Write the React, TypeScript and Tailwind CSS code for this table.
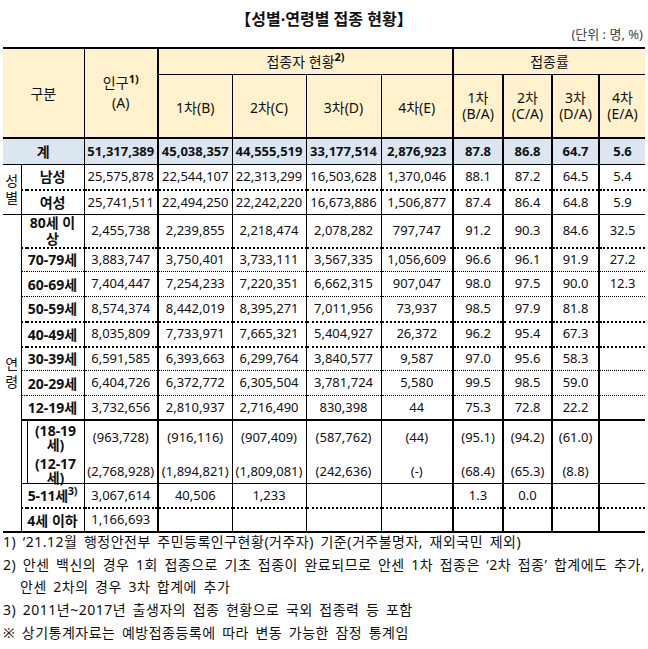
import type { ReactNode } from "react";
import clsx from "clsx";

const colBorder = [
  "border-r-2",
  "border-r",
  "border-r",
  "border-r",
  "border-r-2",
  "border-r-2",
  "border-r-2",
  "border-r-2",
  "",
];

const solid1 = "border-b border-b-black";
const solid2 = "border-b-2 border-b-black";
const dotThin = "border-b border-b-black [border-bottom-style:dotted]";
const dotThick = "border-b-2 border-b-black [border-bottom-style:dotted]";

const cell = "p-0 text-center align-middle whitespace-nowrap border-black";

type AgeRow = {
  label: ReactNode;
  vals: string[];
  bottom: string;
  h: string;
};

const ageRows: AgeRow[] = [
  {
    label: (
      <div className="h-[32px] leading-[16px] whitespace-normal">
        80세 이<br />상
      </div>
    ),
    vals: ["2,455,738", "2,239,855", "2,218,474", "2,078,282", "797,747", "91.2", "90.3", "84.6", "32.5"],
    bottom: dotThick,
    h: "h-[32px]",
  },
  {
    label: "70-79세",
    vals: ["3,883,747", "3,750,401", "3,733,111", "3,567,335", "1,056,609", "96.6", "96.1", "91.9", "27.2"],
    bottom: dotThin,
    h: "h-[24px]",
  },
  {
    label: "60-69세",
    vals: ["7,404,447", "7,254,233", "7,220,351", "6,662,315", "907,047", "98.0", "97.5", "90.0", "12.3"],
    bottom: dotThin,
    h: "h-[25px]",
  },
  {
    label: "50-59세",
    vals: ["8,574,374", "8,442,019", "8,395,271", "7,011,956", "73,937", "98.5", "97.9", "81.8", ""],
    bottom: dotThick,
    h: "h-[25px]",
  },
  {
    label: "40-49세",
    vals: ["8,035,809", "7,733,971", "7,665,321", "5,404,927", "26,372", "96.2", "95.4", "67.3", ""],
    bottom: dotThick,
    h: "h-[25px]",
  },
  {
    label: "30-39세",
    vals: ["6,591,585", "6,393,663", "6,299,764", "3,840,577", "9,587", "97.0", "95.6", "58.3", ""],
    bottom: dotThin,
    h: "h-[24px]",
  },
  {
    label: "20-29세",
    vals: ["6,404,726", "6,372,772", "6,305,504", "3,781,724", "5,580", "99.5", "98.5", "59.0", ""],
    bottom: dotThin,
    h: "h-[25px]",
  },
  {
    label: "12-19세",
    vals: ["3,732,656", "2,810,937", "2,716,490", "830,398", "44", "75.3", "72.8", "22.2", ""],
    bottom: solid2,
    h: "h-[24px]",
  },
];

const subVals: [string, string][] = [
  ["(963,728)", "(2,768,928)"],
  ["(916,116)", "(1,894,821)"],
  ["(907,409)", "(1,809,081)"],
  ["(587,762)", "(242,636)"],
  ["(44)", "(-)"],
  ["(95.1)", "(68.4)"],
  ["(94.2)", "(65.3)"],
  ["(61.0)", "(8.8)"],
  ["", ""],
];

function Vals({ vals, bottom, bold }: { vals: string[]; bottom: string; bold?: boolean }) {
  return (
    <>
      {vals.map((v, i) => (
        <td key={i} className={clsx(cell, colBorder[i], bottom, bold && "font-bold")}>
          {v}
        </td>
      ))}
    </>
  );
}

function Vertical({ chars, gap }: { chars: string[]; gap: string }) {
  return (
    <div className={clsx("flex flex-col items-center text-[14px]", gap)}>
      {chars.map((c) => (
        <span key={c} className="leading-[17px]">
          {c}
        </span>
      ))}
    </div>
  );
}

export default function App() {
  return (
    <div className="w-[648px] h-[649px] bg-white text-[#111] font-['Noto_Sans','Noto_Sans_CJK_KR',sans-serif]">
      <div className="pt-[8px] text-center text-[16px] font-bold leading-[22px]">
        【성별·연령별 접종 현황】
      </div>
      <div className="mt-[-3px] pr-[5px] text-right text-[13px] leading-[14px] text-[#444]">
        (단위 : 명, %)
      </div>

      <div className="mt-[6px] px-[3px]">
        <table className="w-[642px] table-fixed border-collapse text-[13px]">
          <colgroup>
            <col className="w-[18px]" />
            <col className="w-[6px]" />
            <col className="w-[57px]" />
            <col className="w-[74px]" />
            <col className="w-[74px]" />
            <col className="w-[74px]" />
            <col className="w-[75px]" />
            <col className="w-[72px]" />
            <col className="w-[50px]" />
            <col className="w-[49px]" />
            <col className="w-[47px]" />
            <col className="w-[46px]" />
          </colgroup>
          <thead className="bg-[#fff2cc] text-[14px]">
            <tr className="h-[26px]">
              <th
                rowSpan={2}
                colSpan={3}
                className={clsx(cell, "font-normal border-t-2 border-r", solid2)}
              >
                구분
              </th>
              <th rowSpan={2} className={clsx(cell, "font-normal border-t-2 border-r-2", solid2)}>
                <div className="leading-[20px]">
                  인구<sup className="text-[11px] font-bold">1)</sup>
                </div>
                <div className="leading-[20px]">(A)</div>
              </th>
              <th colSpan={4} className={clsx(cell, "font-normal border-t-2 border-r-2", solid1)}>
                접종자 현황<sup className="text-[11px] font-bold">2)</sup>
              </th>
              <th colSpan={4} className={clsx(cell, "font-normal border-t-2", solid1)}>
                접종률
              </th>
            </tr>
            <tr className="h-[64px]">
              {["1차(B)", "2차(C)", "3차(D)", "4차(E)"].map((t, i) => (
                <th key={t} className={clsx(cell, "font-normal pt-[4px]", colBorder[i + 1], solid2)}>
                  {t}
                </th>
              ))}
              {[
                ["1차", "(B/A)"],
                ["2차", "(C/A)"],
                ["3차", "(D/A)"],
                ["4차", "(E/A)"],
              ].map(([a, b], i) => (
                <th key={a} className={clsx(cell, "font-normal", colBorder[i + 5], solid2)}>
                  <div className="leading-[16px]">{a}</div>
                  <div className="leading-[16px]">{b}</div>
                </th>
              ))}
            </tr>
          </thead>
          <tbody>
            <tr className="h-[26px] bg-[#dce6f1]">
              <td colSpan={3} className={clsx(cell, "border-r font-bold text-[14px]", solid1)}>
                계
              </td>
              <Vals
                vals={["51,317,389", "45,038,357", "44,555,519", "33,177,514", "2,876,923", "87.8", "86.8", "64.7", "5.6"]}
                bottom={solid1}
                bold
              />
            </tr>
            <tr className="h-[26px]">
              <td rowSpan={2} className={clsx(cell, "border-r", solid1)}>
                <Vertical chars={["성", "별"]} gap="gap-0" />
              </td>
              <td colSpan={2} className={clsx(cell, "border-r font-bold text-[14px]", dotThick)}>
                남성
              </td>
              <Vals
                vals={["25,575,878", "22,544,107", "22,313,299", "16,503,628", "1,370,046", "88.1", "87.2", "64.5", "5.4"]}
                bottom={dotThick}
              />
            </tr>
            <tr className="h-[24px]">
              <td colSpan={2} className={clsx(cell, "border-r font-bold text-[14px]", solid1)}>
                여성
              </td>
              <Vals
                vals={["25,741,511", "22,494,250", "22,242,220", "16,673,886", "1,506,877", "87.4", "86.4", "64.8", "5.9"]}
                bottom={solid1}
              />
            </tr>
            {ageRows.map((r, idx) => (
              <tr key={idx} className={r.h}>
                {idx === 0 && (
                  <td rowSpan={11} className={clsx(cell, "border-r", solid2)}>
                    <Vertical chars={["연", "령"]} gap="gap-[1px]" />
                  </td>
                )}
                <td colSpan={2} className={clsx(cell, "border-r font-bold text-[14px]", r.bottom)}>
                  {r.label}
                </td>
                <Vals vals={r.vals} bottom={r.bottom} />
              </tr>
            ))}
            <tr className="h-[62px]">
              <td className={clsx(cell, "border-r", solid1)} />
              <td className={clsx(cell, "border-r font-bold text-[14px] align-top", solid1)}>
                <div className="h-[62px] leading-[14px]">
                  <div className="pt-[3px]">
                    (18-19
                    <br />세)
                  </div>
                  <div className="pt-[5px]">
                    (12-17
                    <br />세)
                  </div>
                </div>
              </td>
              {subVals.map(([a, b], i) => (
                <td key={i} className={clsx(cell, "align-top", colBorder[i], solid1)}>
                  <div className="flex h-[62px] flex-col gap-[16px] pt-[7px]">
                    <span className="leading-[18px]">{a}</span>
                    <span className="leading-[18px]">{b}</span>
                  </div>
                </td>
              ))}
            </tr>
            <tr className="h-[25px]">
              <td colSpan={2} className={clsx(cell, "border-r font-bold text-[14px] tracking-[-0.3px]", dotThick)}>
                5-11세<sup className="text-[11px] font-bold">3)</sup>
              </td>
              <Vals vals={["3,067,614", "40,506", "1,233", "", "", "1.3", "0.0", "", ""]} bottom={dotThick} />
            </tr>
            <tr className="h-[24px]">
              <td colSpan={2} className={clsx(cell, "border-r font-bold text-[14px]", solid2)}>
                4세 이하
              </td>
              <Vals vals={["1,166,693", "", "", "", "", "", "", "", ""]} bottom={solid2} />
            </tr>
          </tbody>
        </table>

        <div className="mt-[-2px] text-[14px] leading-[22.7px] tracking-[0.5px] [word-spacing:2.4px] text-[#111]">
          <div>1) ‘21.12월 행정안전부 주민등록인구현황(거주자) 기준(거주불명자, 재외국민 제외)</div>
          <div className="whitespace-nowrap">
            2) 안센 백신의 경우 1회 접종으로 기초 접종이 완료되므로 안센 1차 접종은 ‘2차 접종’ 합계에도 추가,
          </div>
          <div className="pl-[17px]">안센 2차의 경우 3차 합계에 추가</div>
          <div>3) 2011년~2017년 출생자의 접종 현황으로 국외 접종력 등 포함</div>
          <div>※ 상기통계자료는 예방접종등록에 따라 변동 가능한 잠정 통계임</div>
        </div>
      </div>
    </div>
  );
}
